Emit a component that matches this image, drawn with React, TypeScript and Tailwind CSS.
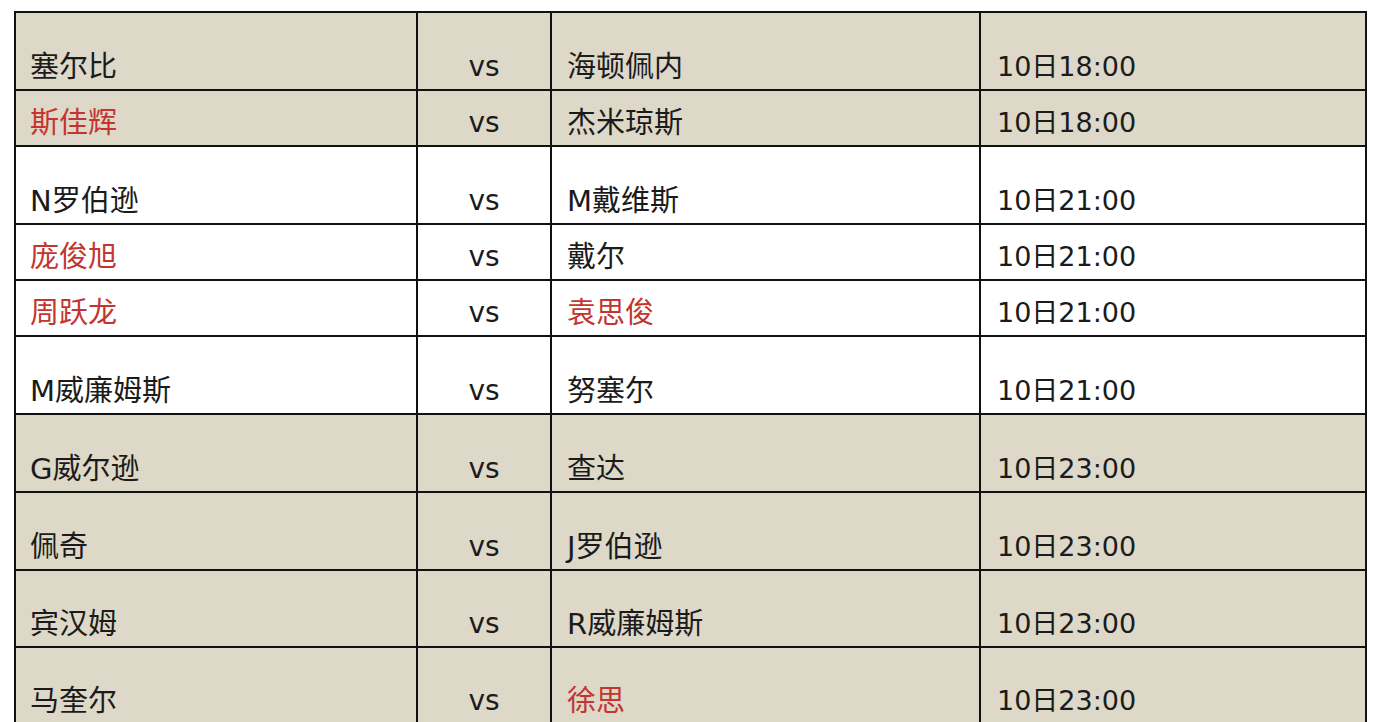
import React from "react";

type Row = {
  a: string;
  aRed?: boolean;
  b: string;
  bRed?: boolean;
  t: string;
  h: string;
  bg: string;
};

const rows: Row[] = [
  { a: "塞尔比", b: "海顿佩内", t: "10日18:00", h: "h-[78px]", bg: "bg-[#ddd8c7]" },
  { a: "斯佳辉", aRed: true, b: "杰米琼斯", t: "10日18:00", h: "h-[56px]", bg: "bg-[#ddd8c7]" },
  { a: "N罗伯逊", b: "M戴维斯", t: "10日21:00", h: "h-[78px]", bg: "bg-white" },
  { a: "庞俊旭", aRed: true, b: "戴尔", t: "10日21:00", h: "h-[56px]", bg: "bg-white" },
  { a: "周跃龙", aRed: true, b: "袁思俊", bRed: true, t: "10日21:00", h: "h-[56px]", bg: "bg-white" },
  { a: "M威廉姆斯", b: "努塞尔", t: "10日21:00", h: "h-[78px]", bg: "bg-white" },
  { a: "G威尔逊", b: "查达", t: "10日23:00", h: "h-[78px]", bg: "bg-[#ddd8c7]" },
  { a: "佩奇", b: "J罗伯逊", t: "10日23:00", h: "h-[78px]", bg: "bg-[#ddd8c7]" },
  { a: "宾汉姆", b: "R威廉姆斯", t: "10日23:00", h: "h-[77px]", bg: "bg-[#ddd8c7]" },
  { a: "马奎尔", b: "徐思", bRed: true, t: "10日23:00", h: "h-[77px]", bg: "bg-[#ddd8c7]" },
];

const cell = "flex items-end border-r-2 border-b-2 border-[#111]";

export default function App() {
  return (
    <div
      className="w-[1374px] h-[722px] overflow-hidden bg-white pt-[11px] pl-[14px]"
      style={{ fontFamily: '"DejaVu Sans", "Noto Sans CJK SC", sans-serif' }}
    >
      <div className="w-[1353px] border-l-2 border-t-2 border-[#111]">
        {rows.map((r, i) => (
          <div
            key={i}
            className={`grid grid-cols-[402px_134px_429px_386px] ${r.h} ${r.bg} text-[#1b1b1b]`}
          >
            <div className={`${cell} pl-[14px] pb-[7px] text-[29px] leading-[30px] ${r.aRed ? "text-[#c4352f]" : ""}`}>{r.a}</div>
            <div className={`${cell} justify-center pb-[8px] text-[28px] leading-[28px]`}>vs</div>
            <div className={`${cell} pl-[15px] pb-[7px] text-[29px] leading-[30px] ${r.bRed ? "text-[#c4352f]" : ""}`}>{r.b}</div>
            <div className={`${cell} pl-[16px] pb-[8px] text-[27px] leading-[28px]`}>{r.t}</div>
          </div>
        ))}
      </div>
    </div>
  );
}
